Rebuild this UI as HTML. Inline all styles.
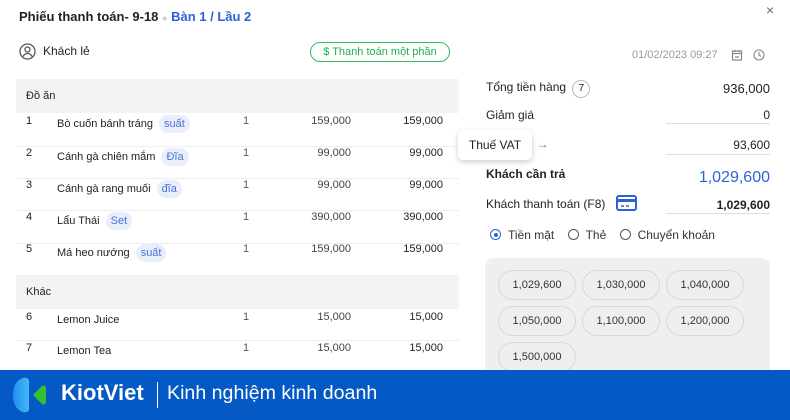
<!DOCTYPE html>
<html><head><meta charset="utf-8"><style>
*{margin:0;padding:0;box-sizing:border-box}
body{width:790px;height:420px;overflow:hidden;background:#fff;font-family:"Liberation Sans","Noto Sans CJK SC",sans-serif;color:#222;position:relative;font-size:12px}
.a{position:absolute;white-space:nowrap}
.r{text-align:right}
.tag{display:inline-block;background:#e8eefb;color:#4a72d6;border-radius:9px;padding:3px 5px;font-size:11px;margin-left:6px}
.sep{position:absolute;left:16px;width:443px;height:1px;background:#eee}
.band{position:absolute;left:16px;width:443px;background:#f3f3f3}
.ul{position:absolute;left:666px;width:104px;height:1px;background:#ddd}
.btn{position:absolute;width:78px;height:30px;border:1px solid #d8d8d8;border-radius:15px;font-size:11px;color:#333;text-align:center;line-height:28px}
.rad{display:inline-block;width:11px;height:11px;border:1px solid #555;border-radius:50%;vertical-align:-1px;margin-right:7px;position:relative}
</style></head><body>
<div class="a" style="left:19px;top:9px;font-size:13px;font-weight:bold">Phiếu thanh toán- 9-18 <span style="color:#ccc;font-size:9px">●</span> <span style="color:#2d62d6">Bàn 1 / Lầu 2</span></div>
<div class="a" style="left:766px;top:2px;font-size:14px;color:#666">×</div>
<svg class="a" style="left:19px;top:43px" width="17" height="17" viewBox="0 0 17 17"><circle cx="8.5" cy="8.5" r="7.5" fill="none" stroke="#555" stroke-width="1.3"/><circle cx="8.5" cy="6.5" r="2.5" fill="none" stroke="#555" stroke-width="1.3"/><path d="M4 13.5c1-2 2.5-3 4.5-3s3.5 1 4.5 3" fill="none" stroke="#555" stroke-width="1.3"/></svg>
<div class="a" style="left:43px;top:44px;font-size:12px">Khách lẻ</div>
<div class="a" style="left:310px;top:42px;width:140px;height:20px;border:1px solid #2fbf5e;border-radius:10px;color:#1fae4f;font-size:11px;text-align:center;line-height:18px">$ Thanh toán một phần</div>
<div class="a" style="left:632px;top:49px;color:#999;font-size:11px">01/02/2023 09:27</div>
<svg class="a" style="left:731px;top:49px" width="12" height="12" viewBox="0 0 12 12"><rect x="1.5" y="2" width="9" height="9" fill="none" stroke="#888" stroke-width="1.2"/><path d="M1.5 4.5h9M4 1v2M8 1v2M4 8h4" stroke="#888" stroke-width="1.2"/></svg>
<svg class="a" style="left:753px;top:49px" width="12" height="12" viewBox="0 0 12 12"><circle cx="6" cy="6" r="5" fill="none" stroke="#888" stroke-width="1.1"/><path d="M6 3v3l2 1.5" fill="none" stroke="#888" stroke-width="1.1"/></svg>

<div class="band" style="top:79px;height:34px"></div>
<div class="a" style="left:26px;top:90px;font-size:11px">Đồ ăn</div>
<div class="band" style="top:275px;height:34px"></div>
<div class="a" style="left:26px;top:286px;font-size:11px">Khác</div>
<div class="sep" style="top:146px"></div><div class="sep" style="top:178px"></div><div class="sep" style="top:210px"></div><div class="sep" style="top:243px"></div><div class="sep" style="top:340px"></div>

<div style="font-size:11px">
<div class="a" style="left:26px;top:115px">1</div><div class="a" style="left:57px;top:115px">Bò cuốn bánh tráng<span class="tag">suất</span></div><div class="a" style="left:243px;top:115px;color:#555">1</div><div class="a r" style="right:439px;top:115px;color:#444">159,000</div><div class="a r" style="right:347px;top:115px">159,000</div>
<div class="a" style="left:26px;top:147px">2</div><div class="a" style="left:57px;top:148px">Cánh gà chiên mắm<span class="tag">Đĩa</span></div><div class="a" style="left:243px;top:147px;color:#555">1</div><div class="a r" style="right:439px;top:147px;color:#444">99,000</div><div class="a r" style="right:347px;top:147px">99,000</div>
<div class="a" style="left:26px;top:179px">3</div><div class="a" style="left:57px;top:180px">Cánh gà rang muối<span class="tag">đĩa</span></div><div class="a" style="left:243px;top:179px;color:#555">1</div><div class="a r" style="right:439px;top:179px;color:#444">99,000</div><div class="a r" style="right:347px;top:179px">99,000</div>
<div class="a" style="left:26px;top:211px">4</div><div class="a" style="left:57px;top:212px">Lẩu Thái<span class="tag">Set</span></div><div class="a" style="left:243px;top:211px;color:#555">1</div><div class="a r" style="right:439px;top:211px;color:#444">390,000</div><div class="a r" style="right:347px;top:211px">390,000</div>
<div class="a" style="left:26px;top:243px">5</div><div class="a" style="left:57px;top:244px">Má heo nướng<span class="tag">suất</span></div><div class="a" style="left:243px;top:243px;color:#555">1</div><div class="a r" style="right:439px;top:243px;color:#444">159,000</div><div class="a r" style="right:347px;top:243px">159,000</div>
<div class="a" style="left:26px;top:311px">6</div><div class="a" style="left:57px;top:314px">Lemon Juice</div><div class="a" style="left:243px;top:311px;color:#555">1</div><div class="a r" style="right:439px;top:311px;color:#444">15,000</div><div class="a r" style="right:347px;top:311px">15,000</div>
<div class="a" style="left:26px;top:342px">7</div><div class="a" style="left:57px;top:345px">Lemon Tea</div><div class="a" style="left:243px;top:342px;color:#555">1</div><div class="a r" style="right:439px;top:342px;color:#444">15,000</div><div class="a r" style="right:347px;top:342px">15,000</div>
</div>

<div class="a" style="left:486px;top:80px">Tổng tiền hàng <span style="display:inline-block;width:18px;height:18px;border:1px solid #bbb;border-radius:50%;text-align:center;line-height:16px;font-size:10px;margin-left:3px">7</span></div>
<div class="a r" style="right:20px;top:81px;font-size:13px">936,000</div>
<div class="a" style="left:486px;top:108px">Giảm giá</div>
<div class="a r" style="right:20px;top:108px">0</div>
<div class="ul" style="top:123px"></div>
<div class="a" style="left:530px;top:137px;color:#777">: →</div>
<div class="a r" style="right:20px;top:138px">93,600</div>
<div class="ul" style="top:154px"></div>
<div class="a" style="left:458px;top:130px;width:74px;height:30px;background:#fff;border-radius:5px;box-shadow:0 2px 6px rgba(0,0,0,.2);text-align:center;line-height:30px">Thuế VAT</div>
<div class="a" style="left:486px;top:167px;font-weight:bold">Khách cần trả</div>
<div class="a r" style="right:20px;top:169px;font-size:16px;color:#2d62d6">1,029,600</div>
<div class="a" style="left:486px;top:197px">Khách thanh toán (F8)</div>
<svg class="a" style="left:616px;top:195px" width="21" height="16" viewBox="0 0 21 16"><rect x="1" y="1" width="19" height="14" rx="2" fill="none" stroke="#2d62d6" stroke-width="2"/><rect x="1" y="4" width="19" height="3" fill="#2d62d6"/><path d="M5 11h3M10 11h3" stroke="#2d62d6" stroke-width="1.5"/></svg>
<div class="a r" style="right:20px;top:198px;font-weight:bold">1,029,600</div>
<div class="ul" style="top:213px"></div>
<div class="a" style="left:490px;top:228px;color:#333"><span class="rad" style="border-color:#2d62d6"><span style="position:absolute;left:2.5px;top:2.5px;width:4px;height:4px;background:#2d62d6;border-radius:50%"></span></span>Tiền mặt&nbsp;&nbsp;&nbsp;&nbsp;<span class="rad"></span>Thẻ&nbsp;&nbsp;&nbsp;&nbsp;<span class="rad"></span>Chuyển khoản</div>
<div class="a" style="left:485px;top:258px;width:285px;height:130px;background:#efefef;border-radius:8px"></div>
<div class="btn" style="left:498px;top:270px">1,029,600</div><div class="btn" style="left:582px;top:270px">1,030,000</div><div class="btn" style="left:666px;top:270px">1,040,000</div>
<div class="btn" style="left:498px;top:306px">1,050,000</div><div class="btn" style="left:582px;top:306px">1,100,000</div><div class="btn" style="left:666px;top:306px">1,200,000</div>
<div class="btn" style="left:498px;top:342px">1,500,000</div>

<div class="a" style="left:0;top:370px;width:790px;height:50px;background:#0459c4"></div>
<svg class="a" style="left:12px;top:377px" width="38" height="36" viewBox="0 0 38 36"><defs><linearGradient id="g" x1="0" x2="1"><stop offset="0" stop-color="#1d8ff0"/><stop offset="1" stop-color="#45b8f5"/></linearGradient></defs><path d="M11 1C4 3 1 10 1 18s3 15 10 17c4 1 6-1 6-3V4c0-2-2-4-6-3z" fill="url(#g)"/><path d="M21 18l9-9c2-1 4 0 4 2v14c0 2-2 3-4 2z" fill="#35c033"/></svg>
<div class="a" style="left:61px;top:380px;color:#fff;font-size:22px;font-weight:bold">KiotViet</div>
<div class="a" style="left:157px;top:382px;width:1px;height:26px;background:#fff"></div>
<div class="a" style="left:167px;top:382px;color:#fff;font-size:19.6px">Kinh nghiệm kinh doanh</div>
</body></html>
